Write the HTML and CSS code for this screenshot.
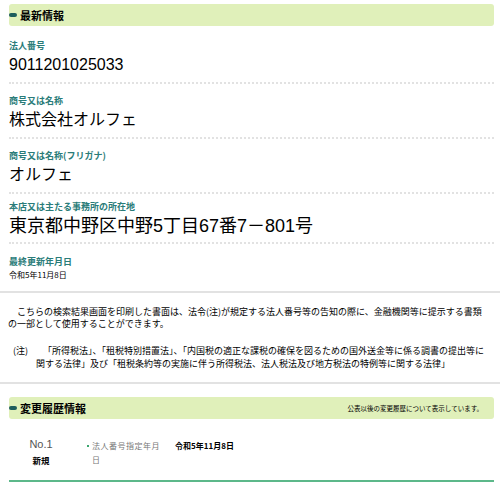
FILE: index.html
```html
<!DOCTYPE html>
<html lang="ja">

<head>
    <meta charset="UTF-8">
    <meta name="viewport" content="width=device-width, initial-scale=1.0">
    <title>法人番号公表サイト</title>
    <link rel="stylesheet" href="styles.css">
</head>

<body>
    <section class="info">
        <h2 class="bar"><span class="bar-mark"></span>最新情報</h2>
        <dl class="fields">
            <div class="field field-first">
                <dt>法人番号</dt>
                <dd>9011201025033</dd>
            </div>
            <div class="field">
                <dt>商号又は名称</dt>
                <dd>株式会社オルフェ</dd>
            </div>
            <div class="field">
                <dt>商号又は名称(フリガナ)</dt>
                <dd>オルフェ</dd>
            </div>
            <div class="field field-address">
                <dt>本店又は主たる事務所の所在地</dt>
                <dd>東京都中野区中野5丁目67番7－801号</dd>
            </div>
            <div class="field field-date">
                <dt>最終更新年月日</dt>
                <dd>令和5年11月8日</dd>
            </div>
        </dl>
    </section>

    <div class="rule"></div>

    <div class="notice">
        <p class="lead">こちらの検索結果画面を印刷した書面は、法令(注)が規定する法人番号等の告知の際に、金融機関等に提示する書類の一部として使用することができます。</p>
        <p class="note"><span class="note-mark">(注)</span>「所得税法」、「租税特別措置法」、「内国税の適正な課税の確保を図るための国外送金等に係る調書の提出等に関する法律」及び「租税条約等の実施に伴う所得税法、法人税法及び地方税法の特例等に関する法律」</p>
    </div>

    <div class="rule rule-bottom"></div>

    <section class="history">
        <h2 class="bar"><span class="bar-mark"></span>変更履歴情報<span class="bar-note">公表以後の変更履歴について表示しています。</span></h2>
        <div class="hist-row">
            <div class="hist-no">
                <span class="no">No.1</span>
                <span class="kind">新規</span>
            </div>
            <ul class="hist-items">
                <li>
                    <span class="hist-label">法人番号指定年月日</span>
                    <span class="hist-value">令和5年11月8日</span>
                </li>
            </ul>
        </div>
    </section>
</body>

</html>
```

FILE: styles.css
```css
body {
    margin: 0;
    padding: 0;
    background-color: #fff;
    color: #000;
    font-family: "Noto Sans CJK JP", sans-serif;
}

.info,
.history {
    margin: 0 6px 0 9px;
}

.info {
    padding-top: 4px;
}

/* green section bar */
.bar {
    position: relative;
    display: flex;
    align-items: center;
    height: 22px;
    margin: 0;
    padding: 0 11px;
    background-color: #e0f0ba;
    border-radius: 3px;
    font-size: 11px;
    font-weight: bold;
}

.bar-mark {
    position: absolute;
    left: 0;
    top: 9px;
    width: 8px;
    height: 4px;
    border-radius: 2px;
    background-color: #1d5d5c;
}

.bar-note {
    margin-left: auto;
    font-size: 6.5px;
    font-weight: normal;
}

.fields {
    margin: 0;
}

.field {
    padding: 10px 0 5px;
    border-bottom: 2px dotted #e2e2e2;
}

.field-first {
    padding-top: 13px;
}

.field-address {
    padding: 6px 0 4px;
}

.field-date {
    padding: 11px 0 0;
    border-bottom: none;
}

.field dt {
    font-size: 9px;
    line-height: 14px;
    font-weight: bold;
    color: #2a7c79;
}

.field dd {
    margin: 0;
    font-family: "Liberation Sans", "Noto Sans CJK JP", sans-serif;
    font-size: 16px;
    line-height: 24px;
}

.field-address dd {
    font-size: 18px;
}

.field-date dd {
    font-family: "Noto Sans CJK JP", sans-serif;
    font-size: 8px;
    line-height: 12px;
}

.rule {
    margin-top: 10px;
    border-top: 2px solid #e2e2e2;
}

.rule-bottom {
    margin-top: 0;
}

.notice {
    padding: 13px 10px 12px 8px;
    font-size: 9px;
    line-height: 12px;
}

.notice p {
    margin: 0;
}

.lead {
    text-indent: 1em;
}

.note {
    margin-top: 14px !important;
    padding-left: 28px;
    text-indent: -23px;
    line-height: 13px;
}

.note-mark {
    display: inline-block;
    width: 30px;
    text-indent: 0;
}

.history {
    margin-top: 13px;
}

.hist-row {
    display: flex;
    padding: 18px 0 13px;
    border-bottom: 2px solid #5cb88a;
}

.hist-no {
    display: flex;
    flex-direction: column;
    align-items: center;
    width: 64px;
}

.no {
    font-family: "Liberation Sans", sans-serif;
    font-size: 11px;
    line-height: 14px;
    color: #555;
}

.kind {
    margin-top: 3px;
    font-size: 8.5px;
    font-weight: bold;
}

.hist-items {
    margin: 2px 0 0 14px;
    padding: 0;
    list-style: none;
}

.hist-items li {
    display: flex;
    align-items: flex-start;
    font-size: 8px;
    line-height: 14px;
}

.hist-label {
    position: relative;
    width: 72px;
    padding-left: 5px;
    letter-spacing: 0.5px;
    color: #777;
}

.hist-label::before {
    content: "";
    position: absolute;
    left: 0;
    top: 6px;
    width: 2px;
    height: 2px;
    background-color: #3aa66e;
}

.hist-value {
    margin-left: 11px;
    font-weight: bold;
}
```
